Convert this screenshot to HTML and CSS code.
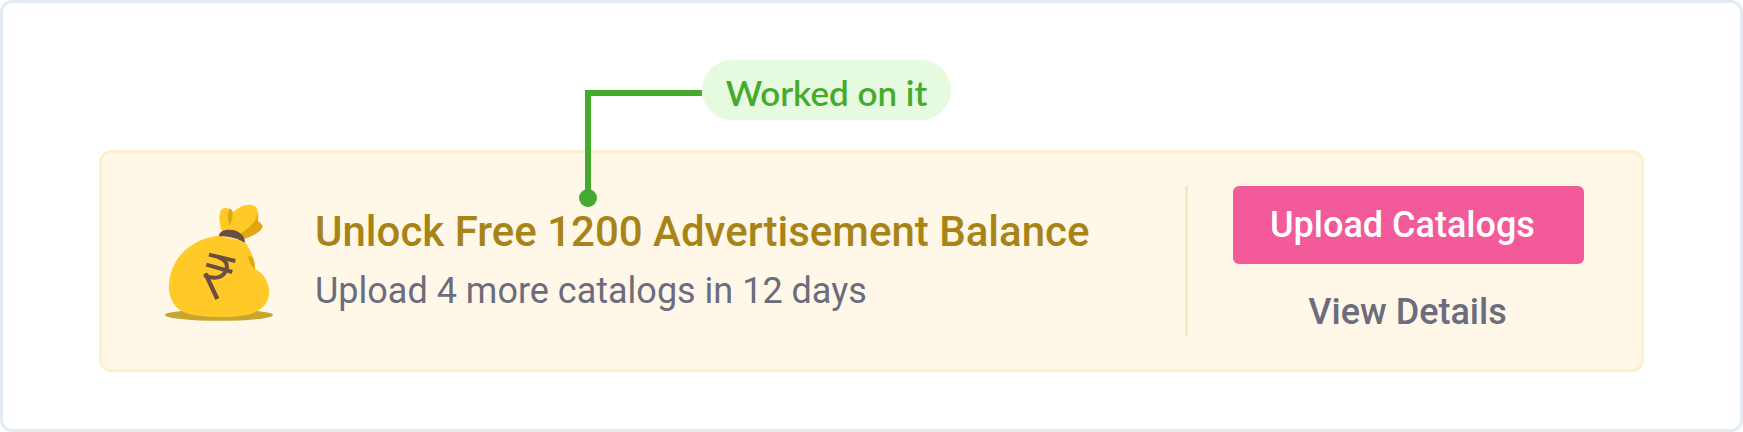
FILE: index.html
```html
<!DOCTYPE html>
<html lang="en">
<head>
    <meta charset="UTF-8">
    <meta name="viewport" content="width=device-width, initial-scale=1.0">
    <title>Advertisement Balance</title>
    <link rel="stylesheet" href="styles.css">
</head>
<body>
    <div class="frame">
        <div class="banner">
            <svg class="money-bag" viewBox="45 39 324 354" aria-hidden="true">
                <ellipse cx="207" cy="375" rx="162" ry="17.5" fill="#c9a42f"/>
                <path d="M216 123C207 101 205 74 213 60C221 49 239 53 250 67C266 50 290 40 309 46C324 51 326 70 324 91C327 96 334 101 338 108C335 123 315 135 284 146Z" fill="#ffca28"/>
                <path d="M239 55C246 59 249 65 248 76C247 88 243 98 239 107C233 93 231 70 239 55Z" fill="#e2a610"/>
                <path d="M324 67C321 93 299 112 273 130L284 146C315 136 335 123 338 108C334 101 327 96 323 92C325 83 325 74 324 67Z" fill="#e2a610"/>
                <path d="M208 137C157 141 105 168 78 214C59 246 53 288 59 313C66 341 81 357 102 367C132 379 172 381 213 381C267 381 313 376 340 350C356 334 360 309 356 291C351 265 336 247 315 236C314 207 302 177 282 154Z" fill="#ffca28"/>
                <path d="M207 139C207 126 218 119 237 119C264 119 285 133 285 158C262 145 234 138 207 139Z" fill="#6d4c41"/>
                <path d="M296 198C308 197 315 213 315 237C305 229 292 210 296 198Z" fill="#e2a610"/>
                <g fill="none" stroke="#6d4c41" stroke-width="12">
                    <path d="M177 194L256 213"/>
                    <path d="M169 224L247 246"/>
                    <path d="M204 201C225 207 235 221 229 239C222 260 196 273 163 255"/>
                    <path d="M166 250L202 327" stroke-width="13"/>
                </g>
            </svg>
            <div class="info">
                <h1 class="title">Unlock Free 1200 Advertisement Balance</h1>
                <p class="subtitle">Upload 4 more catalogs in 12 days</p>
            </div>
            <div class="actions">
                <button class="upload">Upload Catalogs</button>
                <a class="details">View Details</a>
            </div>
        </div>

        <!-- callout pointing at the banner title -->
        <div class="callout">
            <div class="connector"></div>
            <span class="label">Worked on it</span>
        </div>
    </div>
</body>
</html>
```
FILE: styles.css
```css
* {
    box-sizing: border-box;
}
body {
    margin: 0;
    background-color: #fff;
    font-family: Roboto, sans-serif;
}
.frame {
    position: relative;
    height: 432px;
    padding: 147px 96px 0;
    border: 3px solid #e4eaf2;
    border-radius: 12px;
}
.banner {
    display: flex;
    align-items: flex-start;
    height: 222px;
    padding: 33px 57px 33px 63px;
    background-color: #fff8e8;
    border: 3px solid #fdf0d0;
    border-radius: 12px;
}
.money-bag {
    width: 108px;
    height: 118px;
    margin-top: 17px;
}
.info {
    margin: 21px 0 0 42px;
}
.title {
    margin: 0;
    font-size: 42px;
    font-weight: 500;
    line-height: 50px;
    color: #a88418;
    white-space: nowrap;
}
.subtitle {
    margin: 12px 0 0;
    font-size: 36px;
    line-height: 44px;
    color: #6c6c7c;
    white-space: nowrap;
}
.actions {
    display: flex;
    flex-direction: column;
    width: 399px;
    height: 150px;
    margin-left: auto;
    padding-left: 45px;
    border-left: 3px solid #f5e8c4;
}
.upload {
    height: 78px;
    padding: 0 0 0 37px;
    font-family: inherit;
    font-size: 36px;
    font-weight: 500;
    text-align: left;
    color: #fff;
    background-color: #f25a9a;
    border: none;
    border-radius: 6px;
}
.details {
    margin: 27px 0 0;
    padding-right: 2px;
    font-size: 36px;
    font-weight: 500;
    line-height: 42px;
    text-align: center;
    color: #6c6c7c;
}
.callout {
    position: absolute;
    top: 57px;
    left: 576px;
    display: flex;
}
.connector {
    position: relative;
    width: 126px;
    height: 110px;
    margin: 30px 0 0 6px;
    border-top: 6px solid #45aa2d;
    border-left: 6px solid #45aa2d;
}
.connector {
    width: 117px;
}
/* round end of the line */
.connector::after {
    content: "";
    position: absolute;
    bottom: -7px;
    left: -12px;
    width: 18px;
    height: 18px;
    background-color: #45aa2d;
    border-radius: 50%;
}
.label {
    width: 249px;
    height: 60px;
    padding-top: 2px;
    font-family: Lato, sans-serif;
    font-size: 35px;
    font-weight: 600;
    line-height: 60px;
    text-align: center;
    color: #45aa2d;
    background-color: #e6fae0;
    border-radius: 30px;
}
```
